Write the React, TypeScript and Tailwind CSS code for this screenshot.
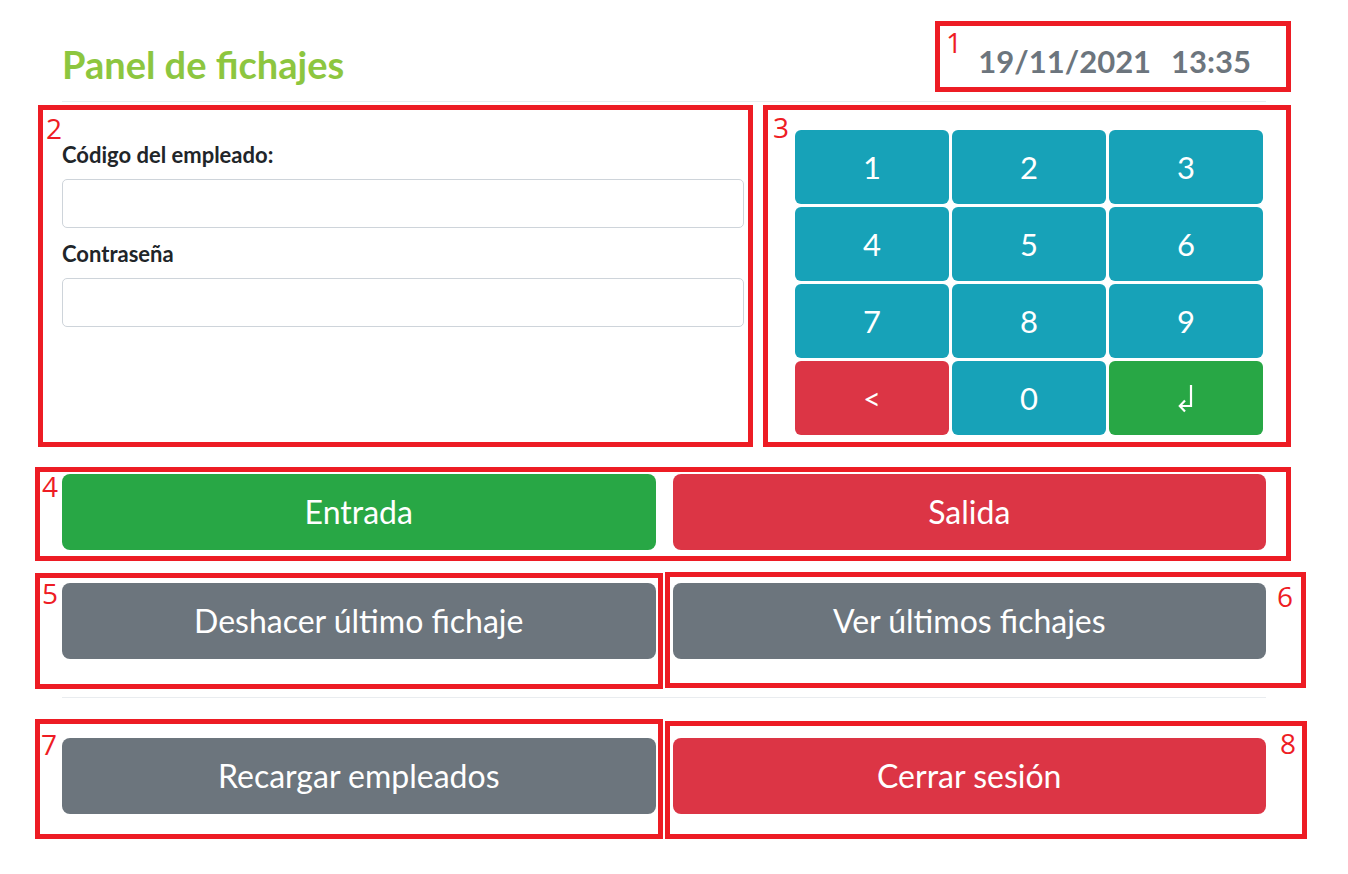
import type { ReactNode } from "react";

type Tone = "info" | "danger" | "success" | "secondary";

const KEYS: { label: ReactNode; tone: Tone }[] = [
  { label: "1", tone: "info" },
  { label: "2", tone: "info" },
  { label: "3", tone: "info" },
  { label: "4", tone: "info" },
  { label: "5", tone: "info" },
  { label: "6", tone: "info" },
  { label: "7", tone: "info" },
  { label: "8", tone: "info" },
  { label: "9", tone: "info" },
  { label: "<", tone: "danger" },
  { label: "0", tone: "info" },
  { label: <EnterIcon />, tone: "success" },
];

const toneClasses: Record<Tone, string> = {
  info: "bg-[#17a2b8]",
  danger: "bg-[#dc3545]",
  success: "bg-[#28a745]",
  secondary: "bg-[#6c757d]",
};

export default function App() {
  return (
    <div className="relative h-[874px] w-[1348px] overflow-hidden bg-white font-['Lato',sans-serif] text-[#212529]">
      <main className="ml-[62px] w-[1204px]">
        <header className="flex h-[102px] items-start justify-between border-b border-[#e9ecef] pt-[45px] pr-[15px]">
          <h1 className="text-[38px] font-bold leading-none text-[#8dc63f]">
            Panel de fichajes
          </h1>
          <p className="mt-[1px] flex gap-[20px] text-[31px] font-bold leading-none text-[#6c757d]">
            <span>19/11/2021</span>
            <span>13:35</span>
          </p>
        </header>

        <section className="flex justify-between pr-[3px]">
          <form className="w-[682px] pt-[39px]">
            <Field label="Código del empleado:" />
            <div className="mt-[12px]">
              <Field label="Contraseña" type="password" />
            </div>
          </form>

          <div className="mt-[28px] grid w-[468px] grid-cols-3 gap-[3px]">
            {KEYS.map((key, index) => (
              <button
                key={index}
                type="button"
                className={`flex h-[74px] items-center justify-center rounded-[6px] text-[31px] leading-none text-white ${toneClasses[key.tone]}`}
              >
                {key.label}
              </button>
            ))}
          </div>
        </section>

        <div className="mt-[39px] grid grid-cols-2 gap-[17px]">
          <ActionButton tone="success">Entrada</ActionButton>
          <ActionButton tone="danger">Salida</ActionButton>
        </div>
        <div className="mt-[33px] grid grid-cols-2 gap-[17px]">
          <ActionButton tone="secondary">Deshacer último fichaje</ActionButton>
          <ActionButton tone="secondary">Ver últimos fichajes</ActionButton>
        </div>

        <hr className="mt-[38px] border-t border-[#e9ecef]" />

        <div className="mt-[40px] grid grid-cols-2 gap-[17px]">
          <ActionButton tone="secondary">Recargar empleados</ActionButton>
          <ActionButton tone="danger">Cerrar sesión</ActionButton>
        </div>
      </main>

      {/* annotation overlay: numbered red frames drawn over the screenshot */}
      <Annotation box="left-[935px] top-[21px] h-[71px] w-[356px] pl-[6px] pt-[2px]">1</Annotation>
      <Annotation box="left-[38px] top-[105px] h-[342px] w-[715px] pl-[3px] pt-[4px]">2</Annotation>
      <Annotation box="left-[763px] top-[105px] h-[342px] w-[528px] pl-[5px] pt-[3px]">3</Annotation>
      <Annotation box="left-[35px] top-[467px] h-[94px] w-[1256px] pl-[2px] pt-[0px]">4</Annotation>
      <Annotation box="left-[35px] top-[573px] h-[116px] w-[628px] pl-[2px] pt-[1px]">5</Annotation>
      <Annotation box="left-[665px] top-[572px] h-[116px] w-[641px] justify-end pr-[8px] pt-[5px]">6</Annotation>
      <Annotation box="left-[35px] top-[719px] h-[120px] w-[628px] pl-[1px] pt-[6px]">7</Annotation>
      <Annotation box="left-[665px] top-[721px] h-[118px] w-[642px] justify-end pr-[6px] pt-[3px]">8</Annotation>
    </div>
  );
}

function Field({ label, type = "text" }: { label: string; type?: string }) {
  return (
    <label className="block">
      <span className="block text-[22px] font-bold leading-[28px]">{label}</span>
      <input
        type={type}
        className="mt-[10px] block h-[49px] w-full rounded-[5px] border border-[#ced4da] bg-white px-3"
      />
    </label>
  );
}

function ActionButton({ tone, children }: { tone: Tone; children: ReactNode }) {
  return (
    <button
      type="button"
      className={`flex h-[76px] items-center justify-center rounded-[8px] text-[32px] leading-none text-white ${toneClasses[tone]}`}
    >
      {children}
    </button>
  );
}

function Annotation({ box, children }: { box: string; children: ReactNode }) {
  return (
    <div className={`pointer-events-none absolute flex items-start border-[5px] border-[#ed1c24] ${box}`}>
      <span className="font-['Open_Sans',sans-serif] text-[28px] leading-none text-[#ee1c24]">
        {children}
      </span>
    </div>
  );
}

function EnterIcon() {
  return (
    <svg width="16" height="30" viewBox="0 0 16 30" fill="none" stroke="white" strokeWidth="2.2">
      <path d="M13 2 V23 H2" />
      <path d="M7 17.5 L1.8 23 L7 28.5" />
    </svg>
  );
}
